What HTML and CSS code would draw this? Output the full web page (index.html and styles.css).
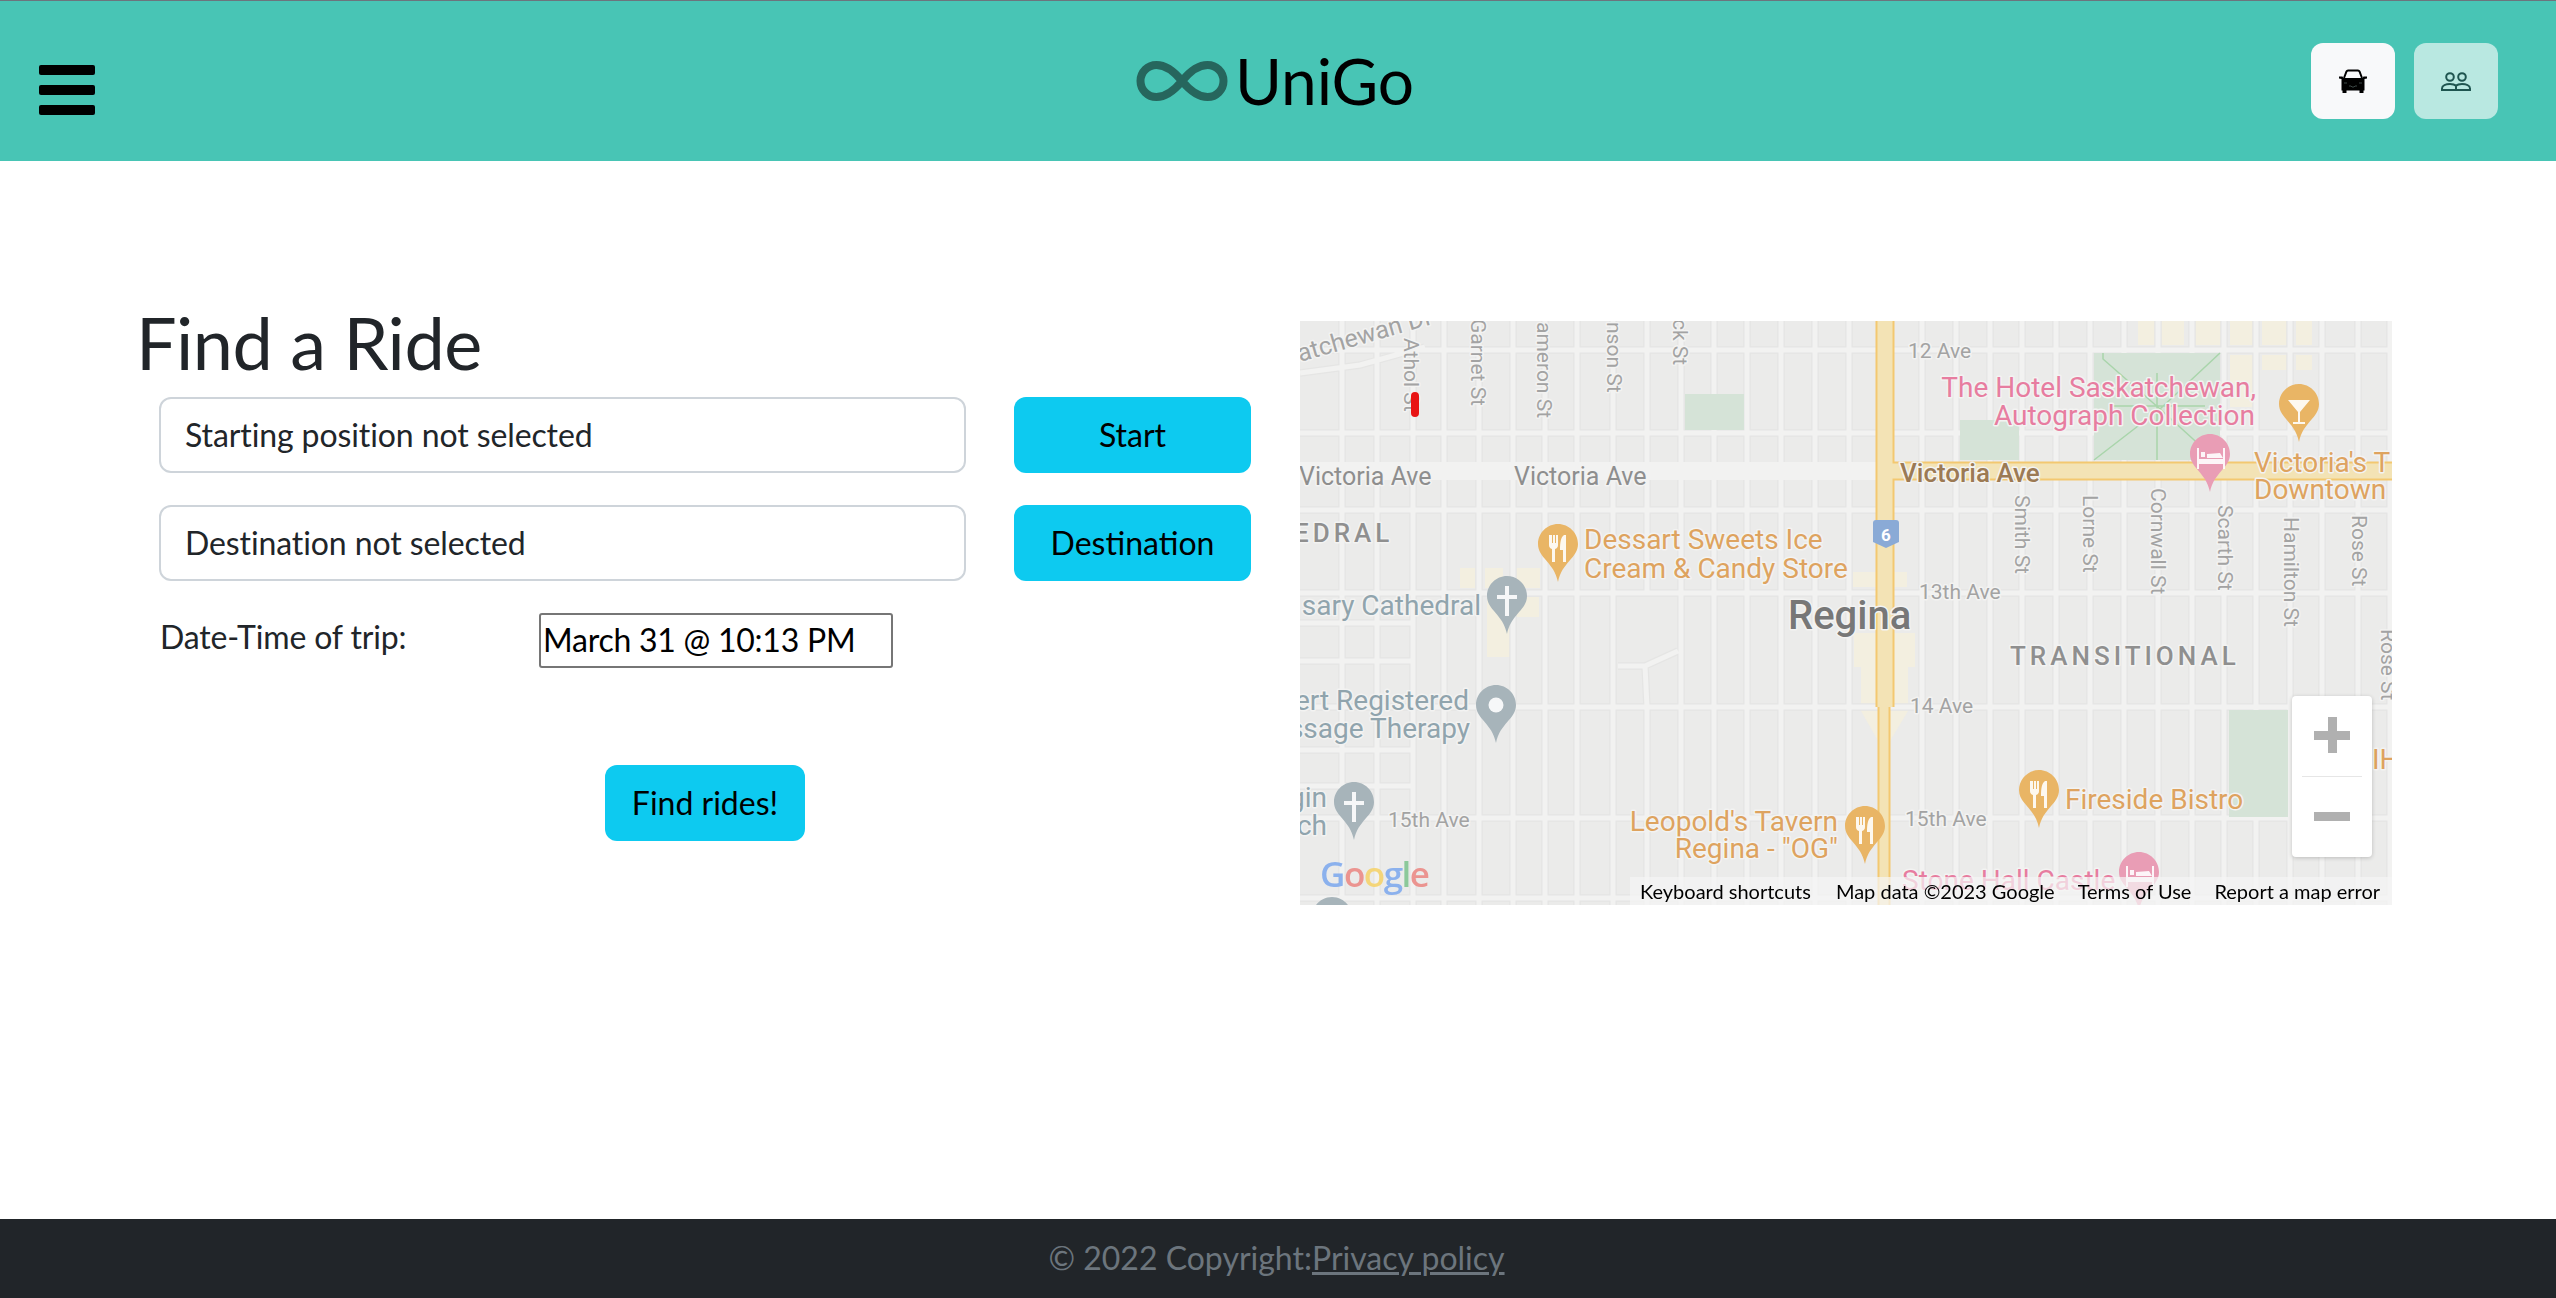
FILE: index.html
```html
<!DOCTYPE html>
<html lang="en">
<head>
    <meta charset="UTF-8">
    <meta name="viewport" content="width=device-width, initial-scale=1.0">
    <title>UniGo - Find a Ride</title>
    <link rel="stylesheet" href="styles.css">
</head>
<body>
    <header class="topbar">
        <button class="menu-btn" type="button" aria-label="Menu">
            <span></span><span></span><span></span>
        </button>
        <div class="brand">
            <svg class="brand-icon" viewBox="0 0 92 42" aria-hidden="true">
                <path d="M46 21C37 10 29 5 20.500 5A16 16 0 0 0 20.500 37C29 37 37 32 46 21C55 10 63 5 71.500 5A16 16 0 0 1 71.500 37C63 37 55 32 46 21Z"/>
            </svg>
            <span class="brand-name">UniGo</span>
        </div>
        <div class="mode-btns">
            <button class="mode-btn mode-btn-on" type="button" aria-label="Driver">
                <svg class="car-icon" viewBox="0 0 28 24" aria-hidden="true">
                    <path class="car-roof" d="M5 9L7.500 2.500Q8 1.500 9 1.500H19Q20 1.500 20.500 2.500L23 9"/>
                    <path d="M0 7.500H3.500L4.500 9H23.500L24.500 7.500H28V9.500L25.500 10V21.500H24.500V24H20.500V21.500H7.500V24H3.500V21.500H2.500V10L0 9.500Z"/>
                    <path class="car-grille" d="M5 14H8M10 17H12L13 18H15L16 17H18M20 14H23"/>
                </svg>
            </button>
            <button class="mode-btn mode-btn-off" type="button" aria-label="Passengers">
                <svg class="people-icon" viewBox="0 0 30 19" aria-hidden="true">
                    <circle cx="9" cy="5" r="3.800"/>
                    <circle cx="21" cy="5" r="3.800"/>
                    <path d="M1 18V16.500C1 13.500 5 12 9 12C11.500 12 13.800 12.600 15 13.800C16.200 12.600 18.500 12 21 12C25 12 29 13.500 29 16.500V18ZM15 13.800V18"/>
                </svg>
            </button>
        </div>
    </header>

    <main class="content">
        <section class="ride-form">
            <h1 class="page-title">Find a Ride</h1>
            <div class="field-row">
                <input class="place-input" type="text" value="Starting position not selected" readonly>
                <button class="cyan-btn place-btn" type="button">Start</button>
            </div>
            <div class="field-row">
                <input class="place-input" type="text" value="Destination not selected" readonly>
                <button class="cyan-btn place-btn" type="button">Destination</button>
            </div>
            <div class="date-row">
                <label class="date-label" for="tripDate">Date-Time of trip:</label>
                <input class="date-input" id="tripDate" type="text" value="March 31 @ 10:13 PM">
            </div>
            <div class="submit-row">
                <button class="cyan-btn find-btn" type="button">Find rides!</button>
            </div>
        </section>

        <section class="map-box">
            <svg class="map-art" viewBox="0 0 1092 584" aria-label="Map of Regina">
                <!-- built up areas -->
                <g class="area-cream">
                    <rect x="838" y="0" width="46" height="24"/>
                    <rect x="894" y="0" width="30" height="24"/>
                    <rect x="930" y="0" width="26" height="24"/>
                    <rect x="962" y="0" width="26" height="24"/>
                    <rect x="996" y="0" width="16" height="24"/>
                    <rect x="930" y="34" width="26" height="52"/>
                    <rect x="962" y="34" width="26" height="15"/>
                    <rect x="996" y="34" width="16" height="15"/>
                    <rect x="160" y="247" width="15" height="20"/>
                    <rect x="185" y="247" width="18" height="20"/>
                    <rect x="216" y="247" width="24" height="20"/>
                    <rect x="187" y="276" width="52" height="20"/>
                    <rect x="187" y="289" width="27" height="47"/>
                    <rect x="553" y="251" width="54" height="15"/>
                    <path d="M554 312H615V346H608V390L584 430L561 390V346H554Z"/>
                </g>

                <!-- streets, drawn twice for the thin edge round each block -->
                <defs>
                    <path id="streets" d="M42 0V584M77 0V584M113 0V584M144 0V584M179 0V584M213 0V584M245 0V584M277 0V584M313 0V584M347 0V272M347 386V584M381 0V584M414 0V584M447 0V584M481 0V584M515 0V584M549 0V584M622 0V584M656 0V584M690 0V584M722 0V584M756 0V584M790 0V584M824 0V584M858 0V584M892 0V584M924 0V584M956 0V584M990 0V584M1022 0V584M1058 0V584M1090 0V584M0 29H1092M0 112H1092M0 189H1092M0 272H1092M0 386H1092M0 497H1092M0 577H1092M0 302H113M0 340H113M0 429H113M0 465H113M0 52L60 44L125 26M318 345H345L378 330M345 345L347 386"/>
                </defs>
                <use class="street-edge" href="#streets"/>
                <use class="street" href="#streets"/>
                <path class="avenue" d="M0 150H580"/>

                <!-- parks -->
                <g class="park">
                    <rect x="385" y="73" width="59" height="36"/>
                    <rect x="660" y="99" width="59" height="40"/>
                    <rect x="794" y="32" width="126" height="107"/>
                    <rect x="929" y="389" width="59" height="107"/>
                </g>
                <path class="park-path" d="M794 139L860 88L920 32M803 32V38L860 88L904 128M857 52V139M812 85H905"/>

                <!-- highway 6 and Victoria Ave -->
                <path class="highway-edge" d="M585 0V386M594 150H1092"/>
                <path class="highway-fill" d="M585 0V386M585 150H1092"/>
                <path class="highway-edge-thin" d="M584 386V584"/>
                <path class="highway-fill-thin" d="M584 386V584"/>
                <path class="shield" d="M573 202Q573 199 576 199H596Q599 199 599 202V221L586 227L573 221Z"/>
                <text class="shield-num" x="586" y="220">6</text>

                <!-- street names -->
                <g class="label-road">
                    <text class="label-bend" transform="translate(0 41) rotate(-16)">atchewan Dr</text>
                    <text transform="translate(104 17) rotate(90)">Athol St</text>
                    <text transform="translate(171 -2) rotate(90)">Garnet St</text>
                    <text transform="translate(237 1) rotate(90)">ameron St</text>
                    <text transform="translate(307 1) rotate(90)">nson St</text>
                    <text transform="translate(373 -2) rotate(90)">ck St</text>
                    <text transform="translate(715 174) rotate(90)">Smith St</text>
                    <text transform="translate(783 174) rotate(90)">Lorne St</text>
                    <text transform="translate(851 167) rotate(90)">Cornwall St</text>
                    <text transform="translate(918 184) rotate(90)">Scarth St</text>
                    <text transform="translate(984 196) rotate(90)">Hamilton St</text>
                    <text transform="translate(1052 194) rotate(90)">Rose St</text>
                    <text transform="translate(1081 308) rotate(90)">Rose St</text>
                    <text x="608" y="37">12 Ave</text>
                    <text x="619" y="278">13th Ave</text>
                    <text x="610" y="392">14 Ave</text>
                    <text x="605" y="505">15th Ave</text>
                    <text x="88" y="506">15th Ave</text>
                </g>
                <g class="label-ave">
                    <text x="-1" y="164">Victoria Ave</text>
                    <text x="214" y="164">Victoria Ave</text>
                </g>
                <text class="label-main" x="600" y="161">Victoria Ave</text>
                <g class="label-area">
                    <text x="-6" y="221">EDRAL</text>
                    <text x="710" y="344">TRANSITIONAL</text>
                </g>
                <text class="label-city" x="488" y="308">Regina</text>

                <!-- places -->
                <g class="label-food">
                    <text x="284" y="228">Dessart Sweets Ice</text>
                    <text x="284" y="257">Cream &amp; Candy Store</text>
                    <text x="954" y="151">Victoria's T</text>
                    <text x="954" y="178">Downtown</text>
                    <text class="label-end" x="538" y="510">Leopold's Tavern</text>
                    <text class="label-end" x="538" y="537">Regina - "OG"</text>
                    <text x="765" y="488">Fireside Bistro</text>
                    <text x="1072" y="448">IH</text>
                </g>
                <g class="label-hotel">
                    <text class="label-end" x="956" y="76">The Hotel Saskatchewan,</text>
                    <text class="label-end" x="955" y="104">Autograph Collection</text>
                    <text x="602" y="569">Stone Hall Castle</text>
                </g>
                <g class="label-grey">
                    <text class="label-end" x="181" y="294">sary Cathedral</text>
                    <text class="label-end" x="169" y="389">ert Registered</text>
                    <text class="label-end" x="170" y="417">ssage Therapy</text>
                    <text class="label-end" x="27" y="486">gin</text>
                    <text class="label-end" x="27" y="514">ch</text>
                </g>

                <!-- pins -->
                <defs>
                    <path id="pin" d="M20 0C31 0 40 9 40 20C40 34 24 38 20 58C16 38 0 34 0 20C0 9 9 0 20 0Z"/>
                    <path id="pin-food" d="M11 11V21Q11 24 14 25V38H17V25Q20 24 20 21V11H18V19H17V11H15V19H14V11ZM26 11C23 13 22 18 22 26H25V38H28V11Z"/>
                    <path id="pin-cross" d="M18 10H22V19H30V23H22V40H18V23H10V19H18Z"/>
                    <path id="pin-bed" d="M7 14H9V25H33V14H35V35H33V30H9V35H7ZM11 18H15V23H11ZM17 20L30 19L33 24H17Z"/>
                </defs>
                <g class="pin-food"><use href="#pin" x="238" y="203"/><use href="#pin" x="545" y="485"/><use href="#pin" x="719" y="449"/><use href="#pin" x="979" y="63"/></g>
                <g class="pin-grey"><use href="#pin" x="187" y="255"/><use href="#pin" x="176" y="364"/><use href="#pin" x="34" y="461"/><use href="#pin" x="12" y="576"/></g>
                <g class="pin-hotel"><use href="#pin" x="890" y="113"/><use href="#pin" x="819" y="531"/></g>
                <g class="pin-glyph">
                    <use href="#pin-food" x="238" y="203"/>
                    <use href="#pin-food" x="545" y="485"/>
                    <use href="#pin-food" x="719" y="449"/>
                    <use href="#pin-cross" x="187" y="255"/>
                    <use href="#pin-cross" x="34" y="461"/>
                    <use href="#pin-bed" x="890" y="113"/>
                    <use href="#pin-bed" x="819" y="531"/>
                    <circle cx="196" cy="384" r="7.500"/>
                    <path d="M988 79H1010L1000 91V101H1005V103H993V101H998V91Z"/>
                </g>

                <rect class="marker" x="111" y="71" width="8" height="25" rx="4"/>

                <text class="g-logo" x="20" y="566"><tspan class="g-blue">G</tspan><tspan class="g-red">o</tspan><tspan class="g-yellow">o</tspan><tspan class="g-blue">g</tspan><tspan class="g-green">l</tspan><tspan class="g-red">e</tspan></text>
            </svg>

            <div class="zoom-ctrl">
                <button class="zoom-btn zoom-in" type="button" aria-label="Zoom in"></button>
                <div class="zoom-line"></div>
                <button class="zoom-btn zoom-out" type="button" aria-label="Zoom out"></button>
            </div>

            <div class="map-attr">
                <span class="attr-keys">Keyboard shortcuts</span>
                <span class="attr-data">Map data ©2023 Google</span>
                <span class="attr-terms">Terms of Use</span>
                <span class="attr-report">Report a map error</span>
            </div>
        </section>
    </main>

    <footer class="page-foot">
        <span>© 2022 Copyright:</span><a class="foot-link" href="#">Privacy policy</a>
    </footer>
</body>
</html>
```

FILE: styles.css
```css
* {
    box-sizing: border-box;
}

body {
    margin: 0;
    height: 100vh;
    display: flex;
    flex-direction: column;
    overflow: hidden;
    background-color: #ffffff;
    color: #212529;
    font-family: "Lato", "Liberation Sans", sans-serif;
    font-size: 32px;
}

button {
    font-family: inherit;
    border: 0;
    cursor: pointer;
}

/* top bar */
.topbar {
    height: 161px;
    flex: none;
    display: grid;
    grid-template-columns: 1fr auto 1fr;
    align-items: center;
    padding: 0 58px 0 39px;
    background-color: #48c5b5;
    border-top: 1px solid #6c757d;
}

.menu-btn {
    width: 56px;
    display: flex;
    flex-direction: column;
    gap: 10.5px;
    margin-top: 18px;
    padding: 0;
    background: none;
}

.menu-btn span {
    height: 9.5px;
    border-radius: 2px;
    background-color: #000000;
}

.brand {
    display: flex;
    align-items: center;
    gap: 7px;
    margin-left: 13px;
}

.brand-icon {
    width: 92px;
    height: 42px;
}

.brand-icon path {
    fill: none;
    stroke: #26665d;
    stroke-width: 8;
}

.brand-name {
    color: #000000;
    font-size: 64px;
    line-height: 76px;
}

.mode-btns {
    display: flex;
    justify-content: flex-end;
    gap: 19px;
}

.mode-btn {
    width: 84px;
    height: 76px;
    display: flex;
    align-items: center;
    justify-content: center;
    padding: 0;
    border-radius: 12px;
}

.mode-btn-on {
    background-color: #f8f9fa;
}

.mode-btn-off {
    background-color: #b9e8e1;
}

.car-icon {
    width: 28px;
    height: 24px;
}

.car-roof {
    fill: none;
    stroke: #000000;
    stroke-width: 2;
}

.car-grille {
    fill: none;
    stroke: #4c5a58;
    stroke-width: 0.8;
}

.people-icon {
    width: 30px;
    height: 19px;
    fill: none;
    stroke: #1f5550;
    stroke-width: 2;
}

/* page */
.content {
    flex: 1;
    display: flex;
    align-items: flex-start;
    gap: 49px;
    padding: 143px 0 0 136px;
}

.ride-form {
    width: 1115px;
}

.page-title {
    margin: 0 0 17px;
    font-size: 72px;
    font-weight: 400;
    line-height: 76px;
    letter-spacing: -0.5px;
}

.field-row {
    display: flex;
    gap: 48px;
    margin: 0 0 32px 23px;
}

.place-input {
    width: 807px;
    height: 76px;
    padding: 0 24px 2px;
    border: 2px solid #ced4da;
    border-radius: 12px;
    outline: none;
    color: #212529;
    font-family: inherit;
    font-size: 32px;
    letter-spacing: -0.1px;
}

.cyan-btn {
    height: 76px;
    padding: 0 0 2px;
    border-radius: 12px;
    background-color: #0dcaf0;
    color: #000000;
    font-size: 32px;
}

.place-btn {
    width: 237px;
}

.date-row {
    display: flex;
    align-items: flex-start;
    margin-left: 24px;
}

.date-label {
    width: 379px;
    line-height: 48px;
    letter-spacing: -0.15px;
}

.date-input {
    width: 354px;
    height: 55px;
    padding: 0 2px 2px;
    border: 2px solid #767676;
    border-radius: 3px;
    outline: none;
    color: #000000;
    font-family: inherit;
    font-size: 32px;
    letter-spacing: -0.25px;
}

.submit-row {
    display: flex;
    margin: 97px 0 0 469px;
}

.find-btn {
    width: 200px;
}

/* map */
.map-box {
    position: relative;
    width: 1092px;
    height: 584px;
    margin-top: 17px;
    overflow: hidden;
    background-color: #ebebea;
}

.map-art {
    display: block;
    width: 1092px;
    height: 584px;
    font-family: "Roboto", sans-serif;
}

.map-art text {
    paint-order: stroke;
    stroke: #f3f3f2;
    stroke-width: 3px;
    stroke-linejoin: round;
}

.area-cream {
    fill: #f3efe0;
}

.street-edge,
.street,
.avenue,
.highway-edge,
.highway-fill,
.highway-edge-thin,
.highway-fill-thin,
.park-path {
    fill: none;
}

.street-edge {
    stroke: #e5e5e4;
    stroke-width: 7.5;
}

.street {
    stroke: #f2f2f1;
    stroke-width: 5;
}

.avenue {
    stroke: #f2f2f1;
    stroke-width: 18;
}

.park {
    fill: #d5e3d7;
}

.park-path {
    stroke: #a9d5ab;
    stroke-width: 1.500;
}

.highway-edge {
    stroke: #f3c870;
    stroke-width: 19;
}

.highway-fill {
    stroke: #f3e3b5;
    stroke-width: 15;
}

.highway-edge-thin {
    stroke: #f3c870;
    stroke-width: 13;
}

.highway-fill-thin {
    stroke: #f3e3b5;
    stroke-width: 9;
}

.shield {
    fill: #8aaad6;
}

.map-art .shield-num {
    fill: #ffffff;
    font-size: 17px;
    font-weight: 700;
    text-anchor: middle;
    stroke: none;
}

.label-road {
    fill: #a3a3a3;
    font-size: 21px;
}

.label-bend {
    font-size: 25px;
}

.label-ave {
    fill: #8e8e8e;
    font-size: 25px;
}

.label-main {
    fill: #9c7a54;
    font-size: 26px;
    font-weight: 500;
}

.label-area {
    fill: #8f8f8f;
    font-size: 26px;
    font-weight: 500;
    letter-spacing: 4px;
}

.label-city {
    fill: #777777;
    font-size: 40px;
    font-weight: 500;
}

.label-food {
    fill: #dea35f;
    font-size: 28px;
}

.label-hotel {
    fill: #e77da0;
    font-size: 28px;
}

.label-grey {
    fill: #90a4ad;
    font-size: 28px;
}

.label-end {
    text-anchor: end;
}

.pin-food {
    fill: #e9b565;
}

.pin-grey {
    fill: #a7b4ba;
}

.pin-hotel {
    fill: #e99db5;
}

.pin-glyph {
    fill: #ffffff;
    opacity: 0.9;
}

.marker {
    fill: #e81414;
}

.map-art .g-logo {
    font-family: "Open Sans", sans-serif;
    font-size: 35px;
    font-weight: 600;
    letter-spacing: -1.5px;
    stroke: none;
    opacity: 0.85;
}

.g-blue {
    fill: #7ba7ee;
}

.g-red {
    fill: #ec8580;
}

.g-yellow {
    fill: #f6d266;
}

.g-green {
    fill: #7cc48c;
}

.zoom-ctrl {
    position: absolute;
    left: 992px;
    top: 375px;
    width: 80px;
    height: 161px;
    display: flex;
    flex-direction: column;
    align-items: center;
    border-radius: 4px;
    background-color: #ffffff;
    box-shadow: 0 1px 4px rgba(0, 0, 0, 0.2);
}

.zoom-btn {
    position: relative;
    width: 80px;
    height: 80px;
    padding: 0;
    background: none;
}

.zoom-line {
    width: 60px;
    height: 1.500px;
    background-color: #e6e6e6;
}

.zoom-in::before,
.zoom-in::after,
.zoom-out::before {
    content: "";
    position: absolute;
    background-color: #b0b0b0;
}

.zoom-in::before,
.zoom-out::before {
    left: 22px;
    top: 35px;
    width: 36px;
    height: 9px;
}

.zoom-in::after {
    left: 35.500px;
    top: 21px;
    width: 9px;
    height: 36px;
}

.map-attr {
    position: absolute;
    left: 330px;
    right: 0;
    bottom: 0;
    height: 28px;
    display: flex;
    align-items: center;
    background-color: rgba(245, 245, 245, 0.7);
    color: #000000;
    font-size: 20px;
    white-space: nowrap;
}

.attr-keys {
    margin-left: 10px;
}

.attr-data {
    margin-left: 25px;
}

.attr-terms {
    margin-left: 23px;
}

.attr-report {
    margin-left: 23px;
}

/* footer */
.page-foot {
    height: 79px;
    flex: none;
    display: flex;
    align-items: center;
    justify-content: center;
    padding: 0 3px 2px 0;
    background-color: #212529;
    color: #6c757d;
    font-size: 32px;
}

.foot-link {
    color: #6c757d;
}
```
